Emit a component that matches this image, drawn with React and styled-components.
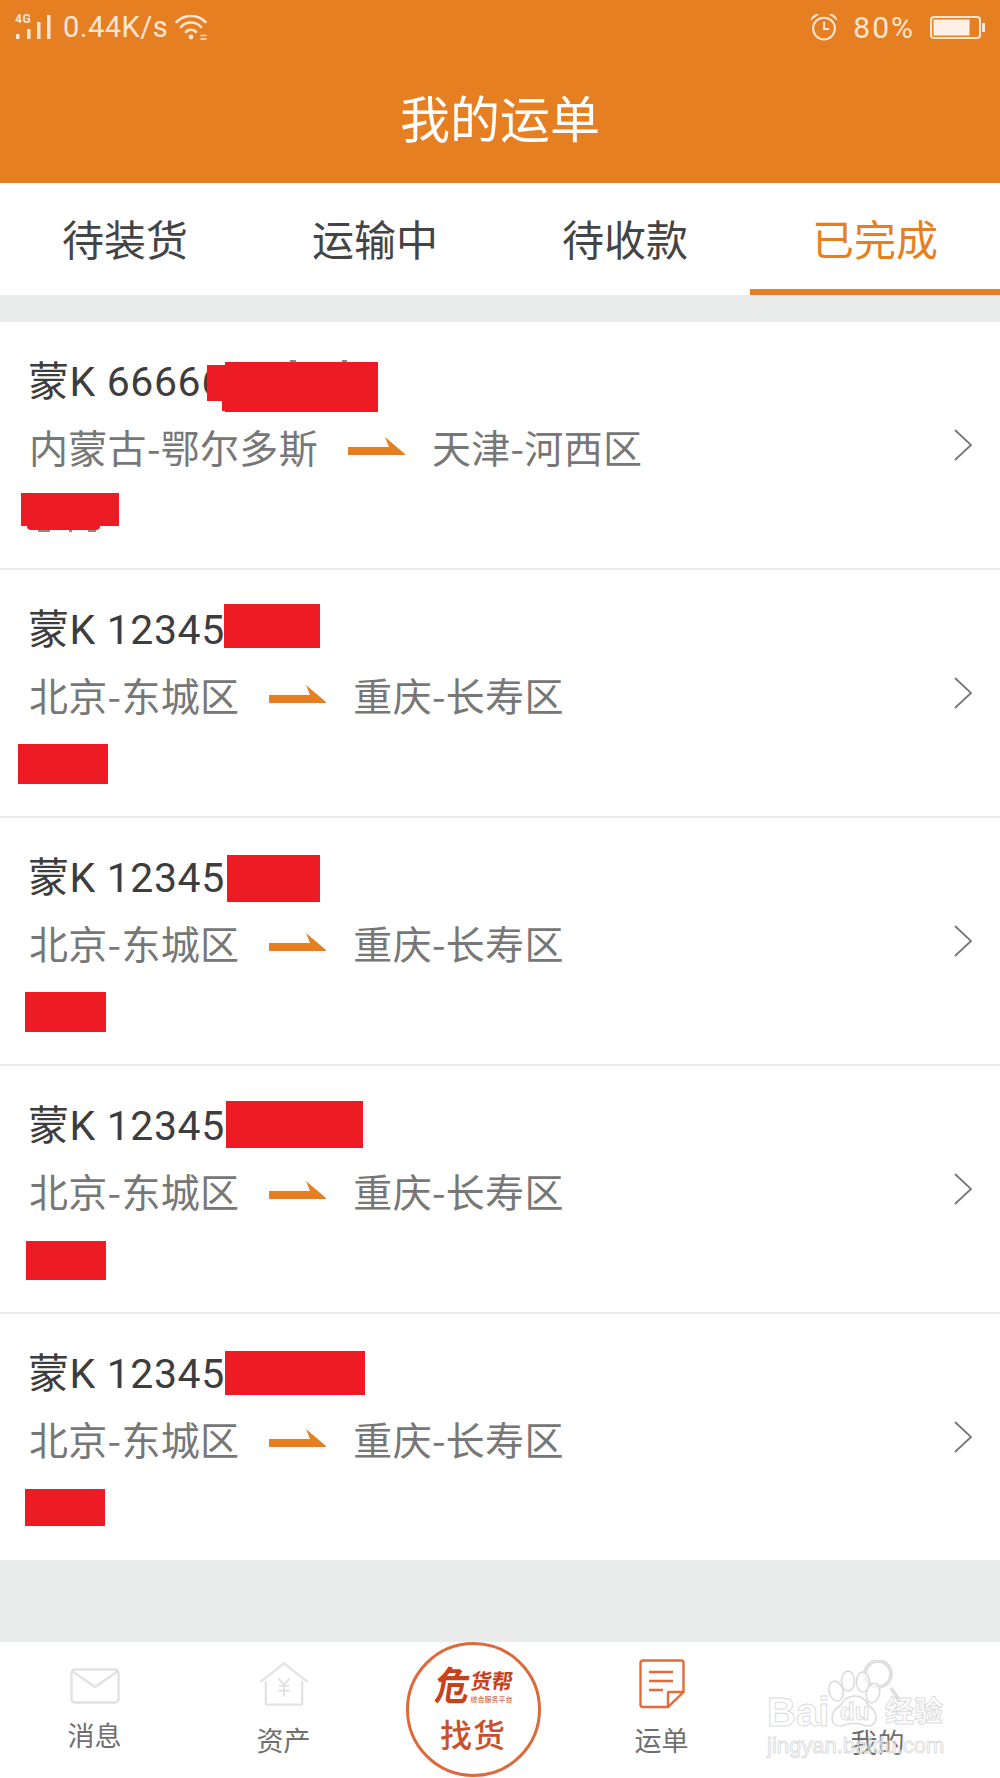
import React from 'react';
import styled, { createGlobalStyle } from 'styled-components';

const ORANGE = '#e67e22';
const RED = '#ed1c24';
const CJK = '"Noto Sans CJK SC", "Noto Sans", sans-serif';

const GlobalStyle = createGlobalStyle`
  html, body { margin: 0; padding: 0; background: #ebedec; }
  body { font-family: ${CJK}; }
`;

const Page = styled.div`
  position: relative;
  width: 1000px;
  height: 1778px;
  display: flex;
  flex-direction: column;
  overflow: hidden;
  background: #ebedec;
`;

const Header = styled.header`
  height: 183px;
  background: ${ORANGE};
  display: flex;
  flex-direction: column;
  color: #fff;
`;

const StatusBar = styled.div`
  height: 50px;
  box-sizing: border-box;
  padding: 4px 15px 0 15px;
  display: flex;
  align-items: center;
  justify-content: space-between;
  color: #fbe6d3;
  font-family: Roboto, sans-serif;
  font-size: 29px;
  letter-spacing: 0.5px;
`;

const StatusGroup = styled.div`
  display: flex;
  align-items: center;
  gap: ${({ $gap }) => $gap}px;
`;

const Percent = styled.span`
  font-size: 30px;
  letter-spacing: 2px;
`;

const Title = styled.h1`
  margin: 0;
  flex: 1;
  display: flex;
  align-items: center;
  justify-content: center;
  font-size: 50px;
  font-weight: 400;
  padding-bottom: 2px;
`;

const Tabs = styled.nav`
  height: 112px;
  background: #fff;
  display: grid;
  grid-template-columns: repeat(4, 1fr);
`;

const Tab = styled.div`
  display: flex;
  align-items: center;
  justify-content: center;
  padding-top: 3px;
  font-size: 42px;
  color: ${({ $active }) => ($active ? ORANGE : '#444')};
  border-bottom: 6px solid ${({ $active }) => ($active ? ORANGE : 'transparent')};
`;

const List = styled.div`
  margin-top: 27px;
  display: flex;
  flex-direction: column;
`;

const Row = styled.div`
  position: relative;
  height: 246px;
  background: #fff;
  margin-bottom: 2px;
  padding: 32px 22px 0 28px;
  box-sizing: border-box;
  &:last-child { margin-bottom: 0; }
`;

const Plate = styled.div`
  font-size: 41px;
  line-height: 56px;
  color: #3d3d3d;
  font-family: Roboto, ${CJK};
  letter-spacing: 0.6px;
  white-space: nowrap;
`;

const Route = styled.div`
  margin-top: 8px;
  margin-left: 1px;
  display: flex;
  align-items: center;
  gap: 30px;
  font-size: 39px;
  line-height: 56px;
  color: #777;
  letter-spacing: 0.3px;
`;

const ArrowSvg = styled.svg`
  margin-right: -4px;
`;

const Chevron = styled.svg`
  position: absolute;
  right: 27px;
  top: 107px;
`;

// painted-over bits of the screenshot, offsets are relative to the row
const Redaction = styled.div`
  position: absolute;
  background: ${RED};
  left: ${({ $x }) => $x}px;
  top: ${({ $y }) => $y}px;
  width: ${({ $w }) => $w}px;
  height: ${({ $h }) => $h}px;
  border-radius: ${({ $round }) => ($round ? '0 0 4px 4px' : '0')};
`;

// bits of hidden text that stick out from under the red
const Remnant = styled.div`
  position: absolute;
  background: #8a8a8a;
  left: ${({ $x }) => $x}px;
  top: ${({ $y }) => $y}px;
  width: ${({ $w }) => $w}px;
  height: 2px;
`;

const BottomNav = styled.nav`
  position: absolute;
  top: 1642px;
  left: 0;
  width: 1000px;
  height: 136px;
  background: #fff;
  display: grid;
  grid-template-columns: 189px 189px 190px 187px 245px;
`;

const NavItem = styled.div`
  display: flex;
  flex-direction: column;
  align-items: center;
  color: #6f6f6f;
  font-size: 27px;
  line-height: 36px;
  padding-top: ${({ $top }) => $top}px;
  gap: ${({ $gap }) => $gap}px;
`;

const Stamp = styled.div`
  width: 135px;
  height: 135px;
  margin: 0 auto;
  box-sizing: border-box;
  border: 3px solid #dc6a3c;
  border-radius: 50%;
  background: #fff;
  display: flex;
  flex-direction: column;
  align-items: center;
  color: #c9502a;
`;

const Logo = styled.div`
  margin-top: 17px;
  margin-left: 2px;
  height: 44px;
  display: flex;
  align-items: flex-start;
  gap: 1px;
  font-weight: 700;
  color: #c4421c;
`;

const LogoBig = styled.span`
  font-size: 34px;
  line-height: 44px;
  transform: skewX(-8deg) scaleY(1.15);
`;

const LogoCol = styled.span`
  display: flex;
  flex-direction: column;
  align-items: center;
`;

const LogoSmall = styled.span`
  font-size: 21px;
  line-height: 26px;
  margin-top: 5px;
  transform: skewX(-8deg);
`;

const LogoTiny = styled.span`
  font-size: 7px;
  line-height: 9px;
  margin-top: 2px;
  font-weight: 400;
`;

const StampLabel = styled.div`
  margin-top: 7px;
  font-size: 32px;
  line-height: 40px;
  letter-spacing: 1px;
  font-weight: 500;
`;

const Watermark = styled.div`
  position: absolute;
  left: 767px;
  top: 1660px;
  width: 190px;
  height: 100px;
  padding-top: 35px;
  box-sizing: border-box;
  pointer-events: none;
`;

const MarkLine = styled.div`
  position: relative;
  display: flex;
  align-items: flex-end;
  height: 34px;
  font-family: "Liberation Sans", ${CJK};
  color: rgba(255, 255, 255, 0.5);
  -webkit-text-stroke: 1px #dcdcdc;
  font-weight: 700;
`;

const MarkPart = styled.span`
  width: ${({ $w }) => $w}px;
  font-size: ${({ $size }) => $size}px;
  line-height: 34px;
  white-space: nowrap;
`;

const MarkUrl = styled.div`
  position: relative;
  margin-top: 5px;
  font-family: "Liberation Sans", sans-serif;
  color: rgba(255, 255, 255, 0.3);
  -webkit-text-stroke: 1px #dedede;
  font-size: 22px;
  line-height: 24px;
  white-space: nowrap;
`;

const Paw = styled.svg`
  position: absolute;
  left: 0;
  top: 0;
`;

const WifiSvg = styled.svg`
  margin-left: -3px;
`;

const Signal = () => (
  <svg width="38" height="28" viewBox="0 0 38 28" fill="#fbe6d3">
    <text x="0" y="10" fontSize="12" fontWeight="700" fontFamily="Roboto, sans-serif">4G</text>
    <rect x="1" y="21" width="3.5" height="5" />
    <rect x="12" y="16" width="3.5" height="10" />
    <rect x="22" y="9" width="3.5" height="17" />
    <rect x="32" y="2" width="3.5" height="24" />
  </svg>
);

const Wifi = () => (
  <WifiSvg width="32" height="26" viewBox="0 0 32 26" fill="none" stroke="#fbe6d3" strokeWidth="2.6" strokeLinecap="round">
    <path d="M1.5 8 C9 0 23 0 30.5 8" />
    <path d="M6 13 C11 7 21 7 26 13" />
    <path d="M11 18 C13 15 19 15 21 18" />
    <circle cx="16" cy="23" r="2.4" fill="#fbe6d3" stroke="none" />
    <path d="M26 21.5 h5 M26 25 h5" strokeWidth="1.6" />
  </WifiSvg>
);

const Alarm = () => (
  <svg width="28" height="28" viewBox="0 0 26 27" fill="none" stroke="#fbe6d3" strokeWidth="2">
    <circle cx="13" cy="15" r="10.5" />
    <path d="M13 8.5 v7 h5" />
    <path d="M1 6 C2 3 4 1.5 7 1.5 Z M25 6 C24 3 22 1.5 19 1.5 Z" fill="#fbe6d3" strokeWidth="1" />
  </svg>
);

const Battery = () => (
  <svg width="55" height="23" viewBox="0 0 55 23" fill="none">
    <rect x="1" y="1" width="49" height="21" rx="3" stroke="#fbe6d3" strokeWidth="2" />
    <rect x="3.5" y="3.5" width="36" height="16" fill="#fdf1e7" />
    <rect x="52" y="7" width="3" height="9" fill="#fbe6d3" />
  </svg>
);

const Arrow = () => (
  <ArrowSvg width="58" height="19" viewBox="0 0 58 19" fill={ORANGE}>
    <path d="M0 10 H41 L37 0 L57 17 L57 18 H0 Z" />
  </ArrowSvg>
);

const Mail = () => (
  <svg width="50" height="36" viewBox="0 0 50 36" fill="none" stroke="#e2e2e2" strokeWidth="2.4">
    <rect x="1.5" y="1.5" width="47" height="33" rx="3.5" />
    <path d="M2 3 L25 19 L48 3" />
  </svg>
);

const House = () => (
  <svg width="50" height="44" viewBox="0 0 52 46" fill="none" stroke="#e2e2e2" strokeWidth="2.4">
    <path d="M1 21 L26 1.5 L51 21" />
    <path d="M7 20 V43 a1.5 1.5 0 0 0 1.5 1.5 H43.5 a1.5 1.5 0 0 0 1.5 -1.5 V20" />
    <path d="M20 17 L26 24 L32 17 M26 24 V36 M20 25 H32 M20 30 H32" strokeWidth="2" />
  </svg>
);

const Waybill = () => (
  <svg width="46" height="50" viewBox="0 0 46 50" fill="none" stroke="#e56a3a" strokeWidth="2.4">
    <path d="M29 48 H3.5 a2 2 0 0 1 -2 -2 V3.5 a2 2 0 0 1 2 -2 H42.5 a2 2 0 0 1 2 2 V33 Z" />
    <path d="M29 48 V34 a1 1 0 0 1 1 -1 H44.5" />
    <path d="M10 13 H34 M10 22 H34 M10 31 H24" />
  </svg>
);

const Chev = () => (
  <Chevron width="20" height="32" viewBox="0 0 20 32" fill="none" stroke="#777" strokeWidth="1.8">
    <path d="M2 1 L18 16 L2 31" />
  </Chevron>
);

const orders = [
  {
    plate: '蒙K 66666',
    from: '内蒙古-鄂尔多斯',
    to: '天津-河西区',
    covers: [
      { x: 225, y: 40, w: 153, h: 50 },
      { x: 207, y: 43, w: 30, h: 36 },
      { x: 222, y: 70, w: 20, h: 19 },
      { x: 21, y: 171, w: 98, h: 33 },
      { x: 27, y: 200, w: 73, h: 8, round: true },
    ],
    remnants: [
      { x: 290, y: 38, w: 6 },
      { x: 342, y: 38, w: 5 },
      { x: 38, y: 208, w: 12 },
      { x: 69, y: 208, w: 3 },
      { x: 88, y: 208, w: 8 },
    ],
  },
  {
    plate: '蒙K 12345',
    from: '北京-东城区',
    to: '重庆-长寿区',
    covers: [
      { x: 224, y: 34, w: 96, h: 44 },
      { x: 18, y: 174, w: 90, h: 40 },
    ],
  },
  {
    plate: '蒙K 12345',
    from: '北京-东城区',
    to: '重庆-长寿区',
    covers: [
      { x: 227, y: 37, w: 93, h: 47 },
      { x: 25, y: 174, w: 81, h: 40 },
    ],
  },
  {
    plate: '蒙K 12345',
    from: '北京-东城区',
    to: '重庆-长寿区',
    covers: [
      { x: 226, y: 35, w: 137, h: 47 },
      { x: 26, y: 175, w: 80, h: 39 },
    ],
  },
  {
    plate: '蒙K 12345',
    from: '北京-东城区',
    to: '重庆-长寿区',
    covers: [
      { x: 225, y: 37, w: 140, h: 44 },
      { x: 25, y: 175, w: 80, h: 37 },
    ],
  },
];

export default function App() {
  return (
    <Page>
      <GlobalStyle />
      <Header>
        <StatusBar>
          <StatusGroup $gap={10}>
            <Signal />
            <span>0.44K/s</span>
            <Wifi />
          </StatusGroup>
          <StatusGroup $gap={15}>
            <Alarm />
            <Percent>80%</Percent>
            <Battery />
          </StatusGroup>
        </StatusBar>
        <Title>我的运单</Title>
      </Header>
      <Tabs>
        <Tab>待装货</Tab>
        <Tab>运输中</Tab>
        <Tab>待收款</Tab>
        <Tab $active>已完成</Tab>
      </Tabs>
      <List>
        {orders.map((o, i) => (
          <Row key={i}>
            <Plate>{o.plate}</Plate>
            <Route>
              <span>{o.from}</span>
              <Arrow />
              <span>{o.to}</span>
            </Route>
            <Chev />
            {o.remnants && o.remnants.map((r, j) => (
              <Remnant key={j} $x={r.x} $y={r.y} $w={r.w} />
            ))}
            {o.covers.map((c, j) => (
              <Redaction key={j} $x={c.x} $y={c.y} $w={c.w} $h={c.h} $round={c.round} />
            ))}
          </Row>
        ))}
      </List>
      <BottomNav>
        <NavItem $top={26} $gap={13}>
          <Mail />
          <span>消息</span>
        </NavItem>
        <NavItem $top={20} $gap={16}>
          <House />
          <span>资产</span>
        </NavItem>
        <div>
          <Stamp>
            <Logo>
              <LogoBig>危</LogoBig>
              <LogoCol>
                <LogoSmall>货帮</LogoSmall>
                <LogoTiny>综合服务平台</LogoTiny>
              </LogoCol>
            </Logo>
            <StampLabel>找货</StampLabel>
          </Stamp>
        </div>
        <NavItem $top={17} $gap={13}>
          <Waybill />
          <span>运单</span>
        </NavItem>
        <NavItem $top={82} $gap={0}>
          <span>我的</span>
        </NavItem>
      </BottomNav>
      <Watermark>
        <Paw width="190" height="100" viewBox="0 0 190 100" fill="none" stroke="#dcdcdc" strokeWidth="1.6">
          <circle cx="111" cy="14" r="13" strokeWidth="4" stroke="#e0e0e0" />
          <path d="M124 28 L133 42" strokeWidth="4" stroke="#e0e0e0" />
          <ellipse cx="69" cy="31" rx="7" ry="10" transform="rotate(-15 69 31)" fill="#fff" fillOpacity="0.6" />
          <ellipse cx="81" cy="21" rx="6.5" ry="10" fill="#fff" fillOpacity="0.6" />
          <ellipse cx="96" cy="22" rx="6.5" ry="10" fill="#fff" fillOpacity="0.6" />
          <ellipse cx="106" cy="33" rx="6.5" ry="10" transform="rotate(15 106 33)" fill="#fff" fillOpacity="0.6" />
          <path d="M74 45 C80 33 96 33 101 45 C112 52 112 66 100 66 C92 63 82 63 74 66 C62 66 62 52 74 45 Z" fill="#fff" fillOpacity="0.5" />
        </Paw>
        <MarkLine>
          <MarkPart $w={73} $size={40}>Bai</MarkPart>
          <MarkPart $w={45} $size={24}>du</MarkPart>
          <MarkPart $size={29}>经验</MarkPart>
        </MarkLine>
        <MarkUrl>jingyan.baidu.com</MarkUrl>
      </Watermark>
    </Page>
  );
}
